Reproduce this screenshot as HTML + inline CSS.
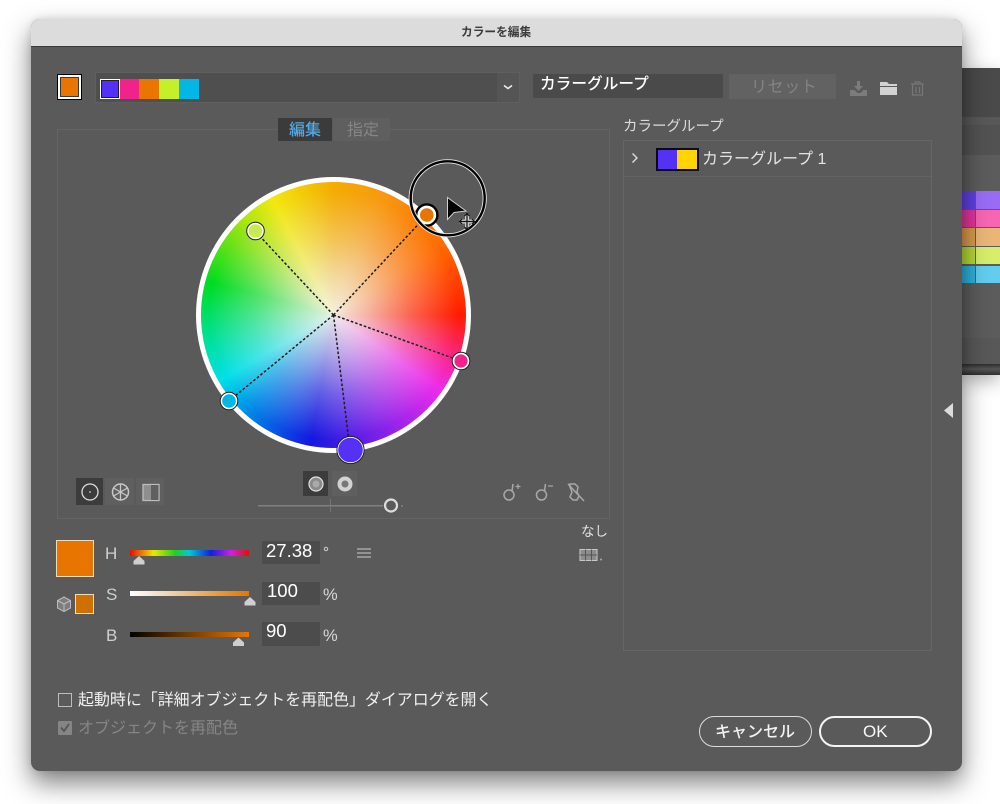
<!DOCTYPE html>
<html lang="ja"><head><meta charset="utf-8"><title>カラーを編集</title>
<style>
html,body{margin:0;padding:0;background:#fff}
body{width:1000px;height:804px;overflow:hidden;position:relative;font-family:"Liberation Sans","Noto Sans CJK JP",sans-serif;color:#e8e8e8}
div,span{position:absolute;box-sizing:border-box}
.t{white-space:nowrap;line-height:1}
.dlg{left:31px;top:19px;width:931px;height:752px;background:#5a5a5a;border-radius:9px;box-shadow:0 12px 26px rgba(0,0,0,.5),0 0 8px rgba(0,0,0,.1);overflow:hidden}
.sw{height:20px;top:79px}
.f{background:#4c4c4c;border-radius:1px}
.sl{left:130px;width:119px;height:5px}
.btn{top:716px;height:31px;border-radius:16px;background:#5a5a5a}
</style></head><body>

<!-- back window -->
<div style="left:962px;top:68px;width:38px;height:307px;background:#5c5c5c;box-shadow:0 6px 18px rgba(0,0,0,.3)">
  <div style="left:0;top:0;width:38px;height:49px;background:#4a4a4a"></div>
  <div style="left:0;top:49px;width:38px;height:8px;background:#585858"></div>
  <div style="left:0;top:57px;width:38px;height:30px;background:#525252"></div>
  <div style="left:0;top:123px;width:13px;height:18px;background:#5f3fe0"></div><div style="left:14px;top:123px;width:24px;height:18px;background:#9a6cf5"></div>
  <div style="left:0;top:142px;width:13px;height:17px;background:#e0359a"></div><div style="left:14px;top:142px;width:24px;height:17px;background:#f666b4"></div>
  <div style="left:0;top:160px;width:13px;height:18px;background:#d99a4c"></div><div style="left:14px;top:160px;width:24px;height:18px;background:#e9b678"></div>
  <div style="left:0;top:179px;width:13px;height:17px;background:#b5d834"></div><div style="left:14px;top:179px;width:24px;height:17px;background:#d6ee6a"></div>
  <div style="left:0;top:198px;width:13px;height:17px;background:#2fb0dc"></div><div style="left:14px;top:198px;width:24px;height:17px;background:#62cdee"></div>
  <div style="left:0;top:270px;width:38px;height:26px;background:#585858"></div>
  <div style="left:0;top:296px;width:38px;height:11px;background:linear-gradient(#2e2e2e,#555 45%,#2e2e2e)"></div>
</div>

<div class="dlg">
  <div style="left:0;top:0;width:931px;height:28px;background:#dcdcdc;border-bottom:1px solid #3a3a3a"></div>
</div>
<div class="t" style="left:461px;top:27px;font-size:11.700px;font-weight:700;color:#3a3a3a">カラーを編集</div>

<!-- top row -->
<div style="left:57px;top:74px;width:25px;height:26px;background:#000;padding:0"></div>
<div style="left:58px;top:75px;width:23px;height:24px;background:#fff"></div>
<div style="left:60px;top:77px;width:19px;height:20px;background:#3a3a3a"></div>
<div style="left:61px;top:78px;width:17px;height:18px;background:#e87500"></div>

<div style="left:95px;top:72px;width:425px;height:31px;background:#4f4f4f;border:1px solid #5f5f5f"></div>
<div style="left:497px;top:73px;width:22px;height:29px;background:#555"></div>
<div class="sw" style="left:100px;width:20px;background:#fff"></div>
<div class="sw" style="left:101px;top:80px;width:18px;height:18px;background:#222"></div>
<div class="sw" style="left:102px;top:81px;width:16px;height:16px;background:#5530f5"></div>
<div class="sw" style="left:120px;width:19px;background:#f0238a"></div>
<div class="sw" style="left:139px;width:20px;background:#ea7500"></div>
<div class="sw" style="left:159px;width:20px;background:#c4f029"></div>
<div class="sw" style="left:179px;width:20px;background:#00b7e6"></div>

<div class="f" style="left:533px;top:74px;width:190px;height:24px;background:#4a4a4a"></div>
<div class="t" style="left:540px;top:77px;font-size:15.700px;font-weight:500;color:#fff">カラーグループ</div>
<div style="left:729px;top:74px;width:107px;height:25px;background:#626262"></div>
<div class="t" style="left:751px;top:80px;font-size:16px;color:#848484;letter-spacing:.6px">リセット</div>

<!-- tabs -->
<div style="left:57px;top:129px;width:553px;height:390px;border:1px solid #636363"></div>
<div style="left:623px;top:140px;width:309px;height:511px;border:1px solid #666"></div>
<div style="left:624px;top:176px;width:307px;height:1px;background:#636363"></div>
<div style="left:333px;top:118px;width:57px;height:23px;background:#5f5f5f"></div>
<div style="left:278px;top:118px;width:54px;height:23px;background:#3b3b3b"></div>
<div class="t" style="left:289px;top:123px;font-size:16px;font-weight:500;color:#55a9e4">編集</div>
<div class="t" style="left:347px;top:123px;font-size:16px;color:#868686">指定</div>

<div class="t" style="left:623px;top:120px;font-size:14.500px;color:#dcdcdc">カラーグループ</div>
<div style="left:656px;top:148px;width:43px;height:23px;background:#0a0a14"></div>
<div style="left:658px;top:150px;width:19px;height:19px;background:#5530f5"></div>
<div style="left:677px;top:150px;width:20px;height:19px;background:#ffd400"></div>
<div class="t" style="left:702px;top:152px;font-size:16px;color:#e4e4e4">カラーグループ 1</div>

<!-- wheel -->
<div style="left:196px;top:177px;width:275px;height:276px;border-radius:50%;background:#fff"></div>
<div style="left:201px;top:182px;width:265px;height:266px;border-radius:50%;background:conic-gradient(from 0deg,#f4ac00 0deg,#f79a10 22deg,#ff6a00 58deg,#ff1c00 90deg,#f8259a 112deg,#ec2cec 125deg,#7a20e8 160deg,#1418e0 190deg,#008ce8 222deg,#00e0e8 240deg,#00e08a 262deg,#00dc20 285deg,#b0e610 318deg,#f2e810 332deg,#f4ac00 360deg)"></div>
<div style="left:201px;top:182px;width:265px;height:266px;border-radius:50%;background:radial-gradient(circle closest-side,rgba(246,244,236,.94) 0%,rgba(242,240,234,.68) 28%,rgba(242,240,238,.32) 60%,rgba(255,255,255,0) 94%)"></div>

<svg width="1000" height="804" viewBox="0 0 1000 804" style="position:absolute;left:0;top:0">
  <g stroke="#1c1c1c" stroke-width="1.500" stroke-dasharray="2.600 2" fill="none">
    <path d="M333.500 315L427 215M333.500 315L255 231M333.500 315L461 361M333.500 315L229 401M333.500 315L350 450"/>
  </g>
  <g stroke="#222" stroke-width="1">
    <circle cx="255.500" cy="231" r="8.800" fill="#fff"/><circle cx="255.500" cy="231" r="6.800" fill="#c8ec50" stroke="none"/>
    <circle cx="461" cy="361" r="8.800" fill="#fff"/><circle cx="461" cy="361" r="6.600" fill="#f0238a" stroke="none"/>
    <circle cx="229" cy="401" r="8.800" fill="#fff"/><circle cx="229" cy="401" r="6.800" fill="#00b7e6" stroke="none"/>
    <circle cx="350.500" cy="450" r="13.600" fill="#fff"/><circle cx="350.500" cy="450" r="11.800" fill="#5530f5" stroke="#5530f5"/>
  </g>
  <circle cx="426.800" cy="215" r="10.600" fill="#fff" stroke="#000" stroke-width="2.400"/>
  <circle cx="426.800" cy="215" r="6.800" fill="#e87500"/>
  <circle cx="447.700" cy="198.300" r="37" fill="none" stroke="#e8e8e8" stroke-width="4.200"/>
  <circle cx="447.700" cy="198.300" r="37" fill="none" stroke="#000" stroke-width="2.400"/>
  <path d="M447.500 197.500V219.500L454 212.500L466 211Z" fill="#000" stroke="#cfcfcf" stroke-width="1"/>
  <g stroke="#ccc" stroke-width="4" fill="none"><path d="M467 214V229M459.500 221.500H474.500"/></g>
  <g stroke="#111" stroke-width="1.200" fill="none"><path d="M467 214V229M459.500 221.500H474.500M464.500 216L467 213.500L469.500 216M464.500 227L467 229.500L469.500 227M462 219L459.500 221.500L462 224M472 219L474.500 221.500L472 224"/></g>

  <!-- chevrons -->
  <path d="M504 85.500L508 88.500L512 85.500" stroke="#eee" stroke-width="1.500" fill="none"/>
  <path d="M632.500 153.500L637 158L632.500 162.500" stroke="#ddd" stroke-width="1.400" fill="none"/>

  <!-- top icons -->
  <g fill="#7c7c7c"><path d="M857 81h3v5h3l-4.500 5-4.500-5h3z"/><path d="M850 90h4.500l3 3h3l3-3H867v6h-17z"/></g>
  <path d="M880 85v-3h7l2 2h8v2h-17zM880 87h17v8h-17z" fill="#d2d2d2"/>
  <g fill="none" stroke="#777" stroke-width="1.200"><path d="M911 84h13M915 84v-2h5v2M912.500 84.500v10.500h10v-10.500M916 87v6M919.500 87v6"/></g>

  <!-- wheel mode icons -->
  <rect x="76" y="478" width="27" height="27" fill="#3c3c3c"/>
  <rect x="105" y="478" width="29" height="27" fill="#5f5f5f"/>
  <rect x="136" y="478" width="28" height="27" fill="#5f5f5f"/>
  <circle cx="90" cy="492" r="8" fill="none" stroke="#ddd" stroke-width="1.300"/><circle cx="90" cy="492" r=".9" fill="#ccc"/>
  <circle cx="120.500" cy="492" r="8" fill="none" stroke="#c8c8c8" stroke-width="1.500"/>
  <path d="M120.500 484v16M113.600 488l13.800 8M113.600 496l13.800-8" stroke="#c8c8c8" stroke-width="1.300"/>
  <rect x="143" y="484.500" width="16" height="16" fill="#8e8e8e" stroke="#bdbdbd" stroke-width="1.300"/>
  <rect x="151" y="485" width="7.500" height="15" fill="#5f5f5f"/>
  <rect x="303" y="471" width="25" height="25" fill="#3c3c3c"/>
  <rect x="332" y="471" width="25" height="25" fill="#5f5f5f"/>
  <circle cx="316" cy="484" r="7" fill="#8a8a8a" stroke="#e2e2e2" stroke-width="1.200"/><circle cx="316" cy="484" r="3.500" fill="#aaa"/>
  <circle cx="345" cy="484" r="7.500" fill="#d2d2d2"/><circle cx="345" cy="484" r="3.500" fill="#777"/>
  <rect x="258" y="505" width="125" height="1.500" fill="#808080"/>
  <rect x="330" y="499" width="1" height="13" fill="#777"/>
  <circle cx="391" cy="505.500" r="6" fill="#5a5a5a" stroke="#dcdcdc" stroke-width="2.200"/>
  <circle cx="402" cy="506" r=".8" fill="#999"/>

  <!-- right icons -->
  <g fill="none" stroke="#a8a8a8" stroke-width="1.500">
    <circle cx="509" cy="495" r="5"/><path d="M512 491L513 484"/>
    <path d="M515.500 486.500h5M518 484v5" stroke-width="1.200"/>
    <circle cx="541.500" cy="495" r="5"/><path d="M544.500 491L545.500 484"/><path d="M548 486h5" stroke-width="1.200"/>
    <path d="M570 484h5l3 3-1 5 2 4-2 4h-4l-3-3 2-5-2-5zM568 484L584 501"/>
  </g>
  <g fill="#bdbdbd" stroke="#c8c8c8"><rect x="580" y="549.500" width="17" height="11" fill="#8c8c8c" stroke-width="1"/><path d="M585.500 549.500v11M591.500 549.500v11M580 555h17" stroke="#555" stroke-width="1"/></g>
  <circle cx="601" cy="559.500" r="1" fill="#aaa"/>

  <!-- HSB ticks -->
  <g fill="#cfcfcf">
    <path d="M139 556l5.500 5v3.500h-11v-3.500z"/>
    <path d="M250 597l5.500 5v3.500h-11v-3.500z"/>
    <path d="M238.500 637.500l5.500 5v3.500h-11v-3.500z"/>
  </g>
  <path d="M357 549h14M357 553h14M357 557h14" stroke="#a6a6a6" stroke-width="1.500"/>
  <circle cx="326" cy="549" r="1.700" fill="none" stroke="#cfcfcf" stroke-width="1"/>

  <!-- cube -->
  <g fill="#7d7d7d" stroke="#bdbdbd" stroke-width="1"><path d="M64 597l6.500 3.500v7.500l-6.500 3.500-6.500-3.500v-7.500z"/><path d="M57.500 600.500l6.500 3.500 6.500-3.500M64 604v7.500" fill="none"/></g>

  <!-- checkbox -->
  <rect x="58.500" y="693.500" width="13" height="13" fill="none" stroke="#bdbdbd" stroke-width="1"/>
  <rect x="58" y="721" width="14" height="14" rx="1" fill="#858585"/>
  <path d="M61 727.500l3 3.500 5-7" stroke="#555" stroke-width="1.800" fill="none"/>

  <!-- collapse arrow -->
  <path d="M953 403v15l-9-7.500z" fill="#dcdcdc"/>
</svg>

<!-- HSB -->
<div style="left:56px;top:540px;width:38px;height:37px;background:#e87500;border:1px solid #f0dcb8"></div>
<div style="left:75px;top:594px;width:19px;height:20px;background:#d07000;border:1px solid #f0dcb8"></div>
<div class="t" style="left:105px;top:545px;font-size:17px;color:#cfcfcf">H</div>
<div class="t" style="left:106px;top:586px;font-size:17px;color:#cfcfcf">S</div>
<div class="t" style="left:106px;top:627px;font-size:17px;color:#cfcfcf">B</div>
<div class="sl" style="top:550px;height:6px;background:linear-gradient(90deg,#e01000,#f09000 12%,#e8e800 20%,#20d020 38%,#00c8d8 50%,#1020e0 68%,#d020e0 85%,#e01000)"></div>
<div class="sl" style="top:591px;height:5px;background:linear-gradient(90deg,#fff,#f2d8b8 30%,#e89030 80%,#e07800)"></div>
<div class="sl" style="top:632px;height:5px;background:linear-gradient(90deg,#000,#6a3600 45%,#e87500)"></div>
<div class="f" style="left:262px;top:541px;width:58px;height:23px"></div>
<div class="f" style="left:262px;top:582px;width:58px;height:23px"></div>
<div class="f" style="left:262px;top:622px;width:58px;height:24px"></div>
<div class="t" style="left:266px;top:542px;font-size:18.500px;color:#fff">27.38</div>
<div class="t" style="left:267px;top:582px;font-size:18.500px;color:#fff">100</div>
<div class="t" style="left:266px;top:622px;font-size:18.500px;color:#fff">90</div>
<div class="t" style="left:323px;top:587px;font-size:16.500px;color:#d8d8d8">%</div>
<div class="t" style="left:323px;top:628px;font-size:16.500px;color:#d8d8d8">%</div>
<div class="t" style="left:581px;top:525px;font-size:13.500px;color:#e0e0e0">なし</div>

<!-- bottom -->
<div class="t" style="left:78px;top:693px;font-size:15.950px;color:#f0f0f0">起動時に「詳細オブジェクトを再配色」ダイアログを開く</div>
<div class="t" style="left:78px;top:721px;font-size:16px;color:#868686">オブジェクトを再配色</div>
<div class="btn" style="left:699px;width:113px;border:1.500px solid #dcdcdc"></div>
<div class="btn" style="left:819px;width:113px;border:2.500px solid #f4f4f4"></div>
<div class="t" style="left:715px;top:725px;font-size:16px;font-weight:500;color:#f2f2f2">キャンセル</div>
<div class="t" style="left:863px;top:723px;font-size:17px;color:#f8f8f8">OK</div>

</body></html>
